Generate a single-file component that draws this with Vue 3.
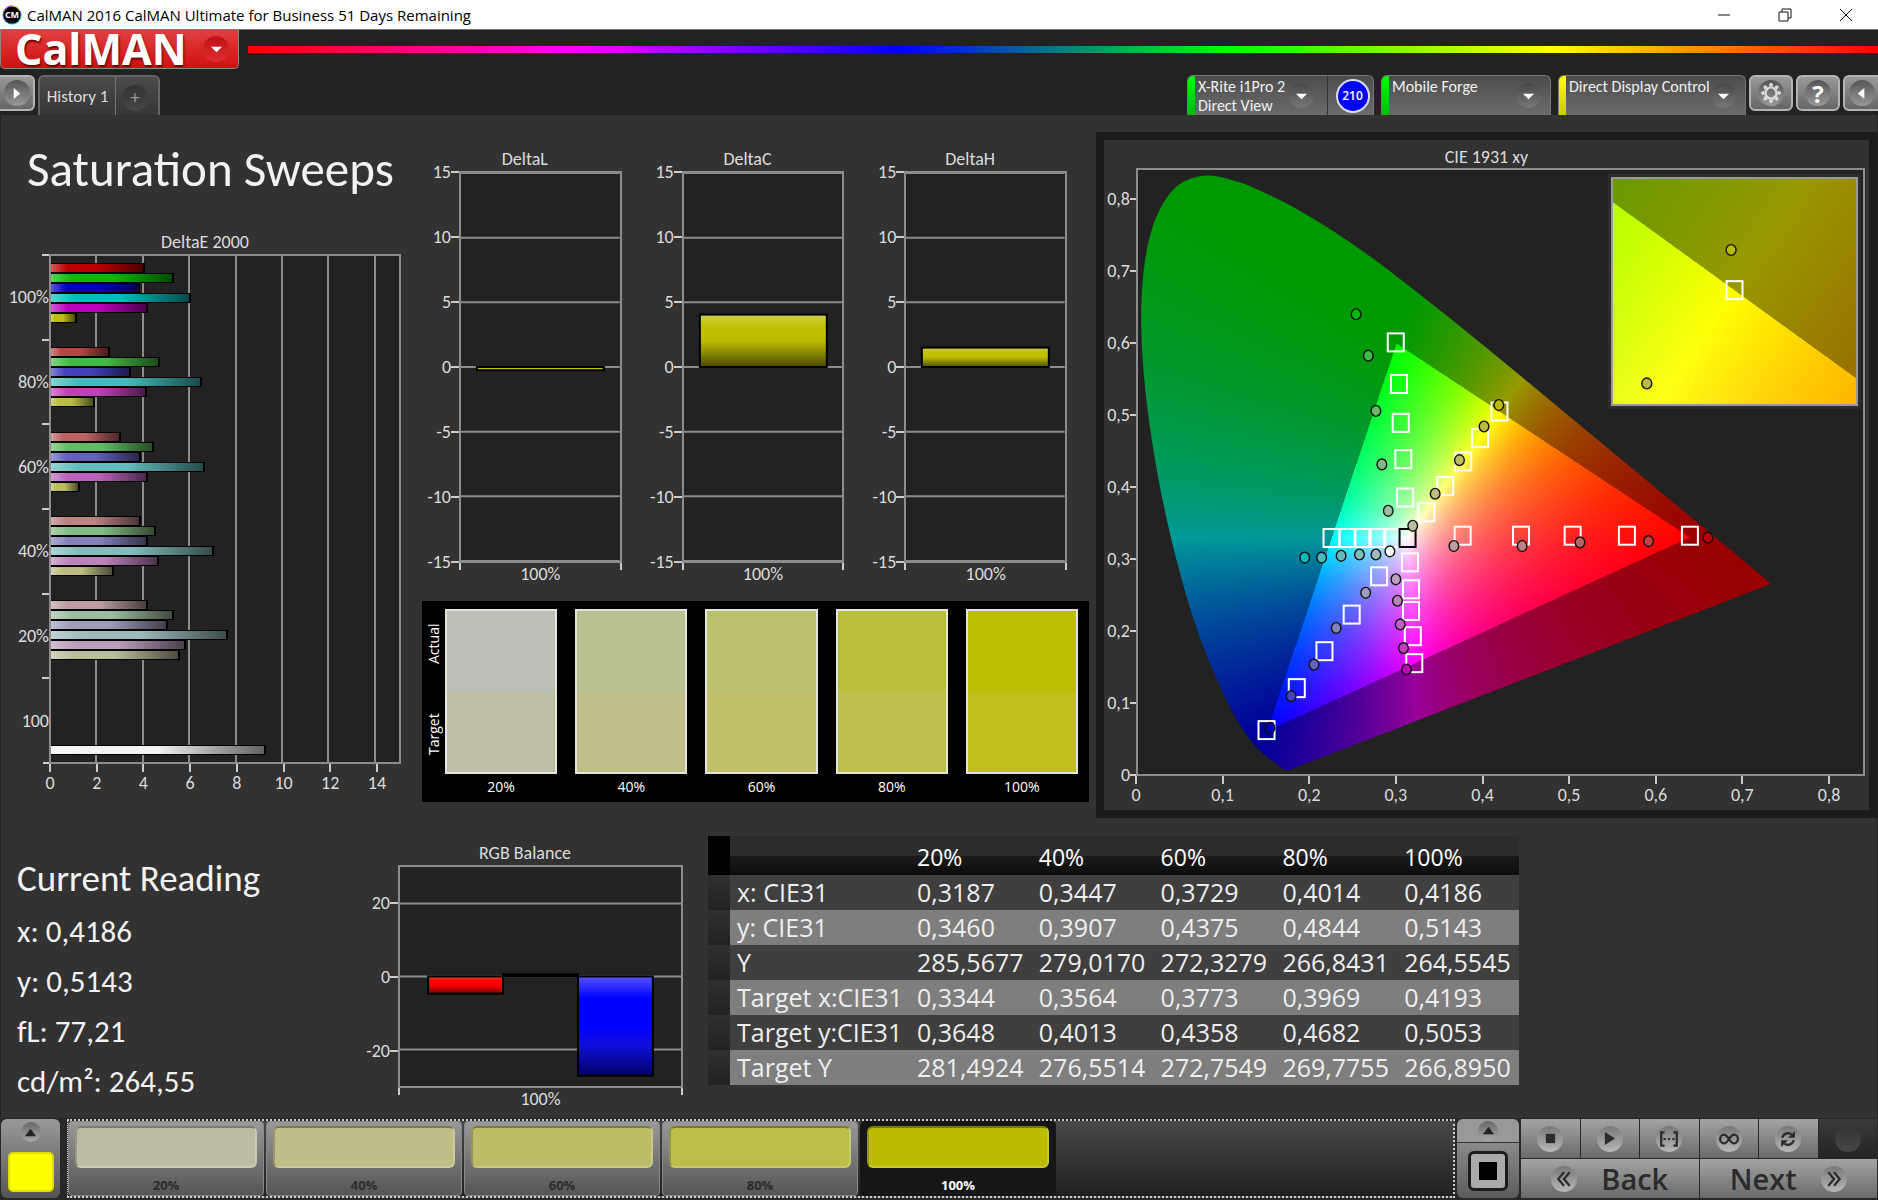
<script setup>
import { ref, onMounted } from 'vue'

const series = [[1, 0, 0], [0, 1, 0], [0, 0, 1], [0, 1, 1], [1, 0, 1], [1, 1, 0]]
const floors = [0, 66, 98, 130, 158]

// Colour of a series at a saturation step (0 = 100%, 4 = 20%).
function tone(channels, step) {
  return `rgb(${channels.map(c => (c ? 188 : floors[step])).join(',')})`
}

const deltaE = [
  { label: '100%', values: [4.06, 5.3, 3.82, 6.03, 4.19, 1.1] },
  { label: '80%', values: [2.55, 4.7, 3.46, 6.49, 4.12, 1.9] },
  { label: '60%', values: [3.02, 4.45, 3.9, 6.62, 4.18, 1.23] },
  { label: '40%', values: [3.86, 4.52, 4.19, 7.02, 4.66, 2.73] },
  { label: '20%', values: [4.19, 5.31, 5.05, 7.63, 5.82, 5.57] },
  { label: '100', values: [], white: 9.26 }
].map((g, step) => ({
  label: g.label,
  bars: g.values.map((v, i) => ({ v, color: tone(series[i], step) })),
  white: g.white
}))

const deltas = [
  { title: 'DeltaL', value: -0.25 },
  { title: 'DeltaC', value: 4.05 },
  { title: 'DeltaH', value: 1.5 }
]
const deltaTicks = [15, 10, 5, 0, -5, -10, -15]
const deltaY = v => ((15 - v) / 30) * 100

const balance = [
  { value: -4.7, fill: 'url(#gRed)' },
  { value: 0.6, fill: '#000' },
  { value: -27.2, fill: 'url(#gBlue)' }
]
const balanceY = v => ((30 - v) / 60) * 100

const swatches = [
  { label: '20%', actual: '#bcc0b4', target: '#bfbfa6', tile: '#bdbda3' },
  { label: '40%', actual: '#b9c092', target: '#c0bf88', tile: '#bfbe86' },
  { label: '60%', actual: '#bbc06f', target: '#bfbf6b', tile: '#bdbd69' },
  { label: '80%', actual: '#babf3a', target: '#bfbf4e', tile: '#bdbd4a' },
  { label: '100%', actual: '#bdc000', target: '#c0bf1c', tile: '#bdbd00' }
]

const table = [
  ['x: CIE31', '0,3187', '0,3447', '0,3729', '0,4014', '0,4186'],
  ['y: CIE31', '0,3460', '0,3907', '0,4375', '0,4844', '0,5143'],
  ['Y', '285,5677', '279,0170', '272,3279', '266,8431', '264,5545'],
  ['Target x:CIE31', '0,3344', '0,3564', '0,3773', '0,3969', '0,4193'],
  ['Target y:CIE31', '0,3648', '0,4013', '0,4358', '0,4682', '0,5053'],
  ['Target Y', '281,4924', '276,5514', '272,7549', '269,7755', '266,8950']
]

// Chromaticity chart: axis extents, targets and readings.
const main = { x0: 0, x1: 0.841, y0: 0, y1: 0.842 }
const detail = { x0: 0.3945, x1: 0.4441, y0: 0.4798, y1: 0.5302 }
const px = (v, x) => `${((x - v.x0) / (v.x1 - v.x0)) * 100}%`
const py = (v, y) => `${((v.y1 - y) / (v.y1 - v.y0)) * 100}%`

const targets = [
  [0.299, 0.6017], [0.3027, 0.5437], [0.3048, 0.4895], [0.3078, 0.4389], [0.3099, 0.3855],
  [0.3766, 0.3322], [0.4443, 0.3322], [0.5042, 0.3322], [0.5671, 0.3322], [0.6402, 0.3322],
  [0.3155, 0.2951], [0.3167, 0.2575], [0.3167, 0.2273], [0.3188, 0.1921], [0.3205, 0.1545],
  [0.2797, 0.2756], [0.2479, 0.2222], [0.2163, 0.1712], [0.1842, 0.1197], [0.1491, 0.0612],
  [0.2245, 0.329], [0.243, 0.329], [0.2607, 0.329], [0.2776, 0.329], [0.2949, 0.329],
  [0.3344, 0.3648], [0.3564, 0.4013], [0.3773, 0.4358], [0.3969, 0.4682], [0.4193, 0.5053]
]
const readings = [
  [[0.6611, 0.3294], [0.5922, 0.3247], [0.5127, 0.3229], [0.4456, 0.3178], [0.3664, 0.3178]],
  [[0.253, 0.6409], [0.2672, 0.5832], [0.276, 0.5061], [0.2829, 0.4316], [0.2903, 0.3669]],
  [[0.1531, 0.0643], [0.1776, 0.1085], [0.2042, 0.1525], [0.2299, 0.2035], [0.2641, 0.2526]],
  [[0.1934, 0.3017], [0.213, 0.3017], [0.2356, 0.3042], [0.2569, 0.306], [0.276, 0.306]],
  [[0.3114, 0.1457], [0.308, 0.1755], [0.3042, 0.2085], [0.301, 0.2415], [0.2991, 0.2714]],
  [[0.4186, 0.5143], [0.4014, 0.4844], [0.3729, 0.4375], [0.3447, 0.3907], [0.3187, 0.346]]
].flatMap((points, s) => points.map(([x, y], step) => ({ x, y, color: tone(series[s], step) })))
readings.push({ x: 0.2922, y: 0.3104, color: '#fff' })

const locus = [
  [0.1741, 0.005], [0.1714, 0.0051], [0.1689, 0.0069], [0.1644, 0.0109], [0.1566, 0.0177],
  [0.144, 0.0297], [0.1355, 0.0399], [0.1241, 0.0578], [0.1096, 0.0868], [0.0913, 0.1327],
  [0.0687, 0.2007], [0.0454, 0.295], [0.0235, 0.4127], [0.0082, 0.5384], [0.0039, 0.6548],
  [0.0139, 0.7502], [0.0389, 0.812], [0.0743, 0.8338], [0.1142, 0.8262], [0.1547, 0.8059],
  [0.1929, 0.7816], [0.2296, 0.7543], [0.2658, 0.7243], [0.3016, 0.6923], [0.3731, 0.6245],
  [0.4441, 0.5547], [0.5125, 0.4866], [0.5752, 0.4242], [0.627, 0.3725], [0.6658, 0.334],
  [0.6915, 0.3083], [0.719, 0.2809], [0.7347, 0.2653]
]

const mainCanvas = ref(null)
const detailCanvas = ref(null)

function paintGamut(canvas, view, clipped) {
  const w = canvas.width
  const h = canvas.height
  const ctx = canvas.getContext('2d')
  const img = ctx.createImageData(w, h)
  let o = 0
  for (let j = 0; j < h; j++) {
    const y = view.y1 - ((j + 0.5) / h) * (view.y1 - view.y0)
    for (let i = 0; i < w; i++) {
      const x = view.x0 + ((i + 0.5) / w) * (view.x1 - view.x0)
      const z = 1 - x - y
      const r = 3.2406 * x - 1.5372 * y - 0.4986 * z
      const g = -0.9689 * x + 1.8758 * y + 0.0415 * z
      const b = 0.0557 * x - 0.204 * y + 1.057 * z
      const level = (Math.min(r, g, b) < 0 ? 153 : 255) / Math.max(r, g, b)
      img.data[o++] = Math.max(0, r) * level
      img.data[o++] = Math.max(0, g) * level
      img.data[o++] = Math.max(0, b) * level
      img.data[o++] = 255
    }
  }
  ctx.putImageData(img, 0, 0)
  if (!clipped) return
  const p = locus.map(([x, y]) => [
    ((x - view.x0) / (view.x1 - view.x0)) * w,
    ((view.y1 - y) / (view.y1 - view.y0)) * h
  ])
  ctx.globalCompositeOperation = 'destination-in'
  ctx.beginPath()
  ctx.moveTo(...p[0])
  for (let k = 0; k < p.length - 1; k++) {
    const a = p[Math.max(0, k - 1)]
    const b = p[k]
    const c = p[k + 1]
    const d = p[Math.min(p.length - 1, k + 2)]
    ctx.bezierCurveTo(
      b[0] + (c[0] - a[0]) / 6, b[1] + (c[1] - a[1]) / 6,
      c[0] - (d[0] - b[0]) / 6, c[1] - (d[1] - b[1]) / 6,
      c[0], c[1]
    )
  }
  ctx.closePath()
  ctx.fill()
}

onMounted(() => {
  paintGamut(mainCanvas.value, main, true)
  paintGamut(detailCanvas.value, detail, false)
})

const cieY = ['0,8', '0,7', '0,6', '0,5', '0,4', '0,3', '0,2', '0,1', '0']
const cieX = [...cieY].reverse()
const teeth = [0, 45, 90, 135, 180, 225, 270, 315]
</script>

<template>
  <div class="app">
    <svg class="defs" aria-hidden="true">
      <defs>
        <linearGradient id="gYellow" x1="0" y1="0" x2="0" y2="1">
          <stop offset="0" stop-color="#d0d050" /><stop offset=".25" stop-color="#c0c000" />
          <stop offset=".5" stop-color="#bcbc04" /><stop offset="1" stop-color="#4a4a00" />
        </linearGradient>
        <linearGradient id="gRed" x1="0" y1="0" x2="0" y2="1">
          <stop offset="0" stop-color="#f44" /><stop offset=".25" stop-color="#f00" />
          <stop offset=".5" stop-color="#f80404" /><stop offset="1" stop-color="#700" />
        </linearGradient>
        <linearGradient id="gBlue" x1="0" y1="0" x2="0" y2="1">
          <stop offset="0" stop-color="#55f" /><stop offset=".22" stop-color="#00f" />
          <stop offset=".5" stop-color="#00f" /><stop offset=".7" stop-color="#1010d8" />
          <stop offset="1" stop-color="#006" />
        </linearGradient>
      </defs>
    </svg>

    <div class="titlebar">
      <svg class="appicon" viewBox="0 0 20 20" aria-hidden="true">
        <circle cx="10" cy="10" r="9" fill="#000" stroke="#36f" stroke-width="1" />
        <path d="M2 6A9 9 0 0 1 10 1" stroke="#f3c" fill="none" /><path d="M10 1A9 9 0 0 1 18 6" stroke="#fd0" fill="none" />
        <path d="M19 10A9 9 0 0 1 12 19" stroke="#0c6" fill="none" />
        <text x="10" y="13" text-anchor="middle" fill="#fff" font-size="9" font-weight="700">CM</text>
      </svg>
      <span class="wintitle">CalMAN 2016 CalMAN Ultimate for Business 51 Days Remaining</span>
      <button class="win" aria-label="Minimize"><svg viewBox="0 0 14 14"><path d="M1 7H13" /></svg></button>
      <button class="win" aria-label="Restore"><svg viewBox="0 0 14 14"><path d="M1 4H10V13H1ZM4 4V1H13V10H10" /></svg></button>
      <button class="win" aria-label="Close"><svg viewBox="0 0 14 14"><path d="M1 1L13 13M13 1L1 13" /></svg></button>
    </div>

    <header>
      <div class="brandrow">
        <button class="logo"><span class="name">CalMAN</span>
          <span class="knob redknob"><svg viewBox="0 0 14 14"><path d="M1 4H13L7 10Z" fill="#fff" /></svg></span>
        </button>
        <div class="rainbow"></div>
      </div>
      <div class="tabrow">
        <button class="square first" aria-label="Expand"><span class="knob"><svg viewBox="0 0 14 14"><path d="M4 1V13L11 7Z" fill="#fff" /></svg></span></button>
        <div class="tabs">
          <button class="tab">History 1</button>
          <button class="addtab" aria-label="Add tab"><span class="knob dark">+</span></button>
        </div>
        <div class="spacer"></div>
        <div class="device meter green">
          <button class="devbtn"><span>X-Rite i1Pro 2<br>Direct View</span>
            <span class="knob deep"><svg viewBox="0 0 14 14"><path d="M1 5H13L7 11Z" fill="#fff" /></svg></span></button>
          <button class="count"><span>210</span></button>
        </div>
        <div class="device forge green">
          <button class="devbtn"><span>Mobile Forge</span>
            <span class="knob deep"><svg viewBox="0 0 14 14"><path d="M1 5H13L7 11Z" fill="#fff" /></svg></span></button>
        </div>
        <div class="device direct yellow">
          <button class="devbtn"><span>Direct Display Control</span>
            <span class="knob deep"><svg viewBox="0 0 14 14"><path d="M1 5H13L7 11Z" fill="#fff" /></svg></span></button>
        </div>
        <button class="square" aria-label="Settings"><span class="knob"><svg class="big" viewBox="-10 -10 20 20">
          <circle r="5" fill="none" stroke="#ddd" stroke-width="2" />
          <path v-for="a in teeth" :key="a" d="M-2 -6L-1 -9H1L2 -6Z" fill="#ddd" :transform="`rotate(${a})`" />
        </svg></span></button>
        <button class="square help" aria-label="Help"><span class="knob">?</span></button>
        <button class="square last" aria-label="Collapse"><span class="knob"><svg viewBox="0 0 14 14"><path d="M10 1V13L3 7Z" fill="#fff" /></svg></span></button>
      </div>
    </header>

    <main>
      <section class="upper">
        <div class="colA">
          <h1>Saturation Sweeps</h1>
          <figure class="hchart">
            <figcaption>DeltaE 2000</figcaption>
            <div class="hgroups">
              <div v-for="g in deltaE" :key="g.label" class="hlabel">{{ g.label }}</div>
            </div>
            <div class="hplot">
              <div class="hlines"><i v-for="n in 7" :key="n"></i></div>
              <div class="hbars">
                <div v-for="g in deltaE" :key="g.label" class="hgroup">
                  <div v-for="(b, i) in g.bars" :key="i" class="hbar" :style="{ width: (b.v / 15) * 100 + '%', backgroundColor: b.color }"></div>
                  <div v-if="g.white" class="hbar white" :style="{ width: (g.white / 15) * 100 + '%' }"></div>
                </div>
              </div>
            </div>
            <div class="xticks haxis"><span v-for="n in 8" :key="n">{{ (n - 1) * 2 }}</span></div>
          </figure>
        </div>

        <div class="colB">
          <div class="deltas">
            <figure v-for="d in deltas" :key="d.title" class="vchart">
              <figcaption>{{ d.title }}</figcaption>
              <div class="yticks"><span v-for="t in deltaTicks" :key="t">{{ t }}</span></div>
              <svg class="vplot">
                <line v-for="t in deltaTicks" :key="t" x1="0" x2="100%" :y1="deltaY(t) + '%'" :y2="deltaY(t) + '%'" />
                <rect x="10%" width="80%" :y="deltaY(Math.max(d.value, 0)) + '%'" :height="Math.abs(d.value) / 30 * 100 + '%'"
                  :fill="d.value < 0 ? '#c0c000' : 'url(#gYellow)'" />
              </svg>
              <div class="xlabel">100%</div>
            </figure>
          </div>
          <div class="compare">
            <div class="sides"><span>Target</span><span>Actual</span></div>
            <div v-for="s in swatches" :key="s.label" class="swatch">
              <div class="pair"><i :style="{ background: s.actual }"></i><i :style="{ background: s.target }"></i></div>
              <span>{{ s.label }}</span>
            </div>
          </div>
        </div>

        <div class="colC">
          <figure class="cie">
            <figcaption>CIE 1931 xy</figcaption>
            <div class="yticks cieyticks"><span v-for="t in cieY" :key="t">{{ t }}</span></div>
            <div class="cieplot">
              <canvas ref="mainCanvas" width="1456" height="1208"></canvas>
              <svg class="marks">
                <svg v-for="(t, i) in targets" :key="'t' + i" :x="px(main, t[0])" :y="py(main, t[1])" overflow="visible">
                  <rect x="-8" y="-9" width="16" height="18" fill="none" stroke="#fff" stroke-width="2" />
                </svg>
                <svg :x="px(main, 0.3127)" :y="py(main, 0.329)" overflow="visible">
                  <rect x="-8" y="-9" width="16" height="18" fill="none" stroke="#000" stroke-width="2" />
                </svg>
                <svg v-for="(r, i) in readings" :key="'r' + i" :x="px(main, r.x)" :y="py(main, r.y)" overflow="visible">
                  <ellipse rx="4.8" ry="5.4" :fill="r.color" stroke="#111" stroke-width="1.4" />
                </svg>
              </svg>
              <div class="inset">
                <canvas ref="detailCanvas" width="488" height="450"></canvas>
                <svg class="marks">
                  <svg :x="px(detail, 0.4193)" :y="py(detail, 0.5053)" overflow="visible">
                    <rect x="-8" y="-9" width="16" height="18" fill="none" stroke="#fff" stroke-width="2" />
                  </svg>
                  <svg v-for="(r, i) in [readings[25], readings[26]]" :key="i" :x="px(detail, r.x)" :y="py(detail, r.y)" overflow="visible">
                    <ellipse rx="5" ry="5.4" :fill="r.color" stroke="#111" stroke-width="1.4" />
                  </svg>
                </svg>
              </div>
            </div>
            <div class="xticks ciexticks"><span v-for="t in cieX" :key="t">{{ t }}</span></div>
          </figure>
        </div>
      </section>

      <section class="lower">
        <div class="reading">
          <h2>Current Reading</h2>
          <p>x: 0,4186</p>
          <p>y: 0,5143</p>
          <p>fL: 77,21</p>
          <p>cd/m²: 264,55</p>
        </div>
        <figure class="vchart rgb">
          <figcaption>RGB Balance</figcaption>
          <div class="yticks"><span v-for="t in [20, 0, -20]" :key="t">{{ t }}</span></div>
          <svg class="vplot">
            <line v-for="t in [20, 0, -20]" :key="t" x1="0" x2="100%" :y1="balanceY(t) + '%'" :y2="balanceY(t) + '%'" />
            <rect v-for="(b, i) in balance" :key="i" :x="10 + (i * 80) / 3 + '%'" :width="80 / 3 + '%'"
              :y="balanceY(Math.max(b.value, 0)) + '%'" :height="Math.abs(b.value) / 60 * 100 + '%'" :fill="b.fill" />
          </svg>
          <div class="xlabel">100%</div>
        </figure>
        <table>
          <thead>
            <tr><td class="stub"></td><th></th><th v-for="s in swatches" :key="s.label" scope="col">{{ s.label }}</th></tr>
          </thead>
          <tbody>
            <tr v-for="row in table" :key="row[0]">
              <td class="stub"></td><th scope="row">{{ row[0] }}</th>
              <td v-for="(v, i) in row.slice(1)" :key="i">{{ v }}</td>
            </tr>
          </tbody>
        </table>
      </section>
    </main>

    <footer>
      <button class="picker" aria-label="Choose pattern">
        <span class="knob small"><svg viewBox="0 0 14 14"><path d="M1 11H13L7 3Z" fill="#222" /></svg></span>
        <span class="chip"></span>
      </button>
      <div class="strip">
        <button v-for="(s, i) in swatches" :key="s.label" class="tile" :class="{ active: i === 4 }">
          <span class="face" :style="{ background: s.tile }"></span>{{ s.label }}
        </button>
      </div>
      <div class="mode">
        <button class="up" aria-label="Open"><span class="knob small"><svg viewBox="0 0 14 14"><path d="M1 11H13L7 3Z" fill="#222" /></svg></span></button>
        <button class="window" aria-label="Window"><span><i></i></span></button>
      </div>
      <div class="transport">
        <div class="row">
          <button aria-label="Stop"><span class="knob lite"><svg viewBox="0 0 14 14"><path d="M2 2H12V12H2Z" fill="#2b2b2b" /></svg></span></button>
          <button aria-label="Play"><span class="knob lite"><svg viewBox="0 0 14 14"><path d="M2 0V14L13 7Z" fill="#2b2b2b" /></svg></span></button>
          <button aria-label="Range"><span class="knob lite"><svg class="wide" viewBox="0 0 18 14"><path d="M5 1H2V13H5M13 1H16V13H13M4 7H6M8 7H10M12 7H14" fill="none" stroke="#2b2b2b" stroke-width="2" /></svg></span></button>
          <button aria-label="Continuous"><span class="knob lite"><svg class="wide" viewBox="0 0 18 14"><path d="M9 7C7 4 6 3 4.5 3A3.5 4 0 0 0 4.5 11C6 11 7 10 9 7C11 4 12 3 13.5 3A3.5 4 0 0 1 13.5 11C12 11 11 10 9 7Z" fill="none" stroke="#2b2b2b" stroke-width="2" /></svg></span></button>
          <button aria-label="Refresh"><span class="knob lite"><svg class="loop" viewBox="0 0 14 14"><path d="M2 6A5 5 0 0 1 10 3M12 8A5 5 0 0 1 4 11" fill="none" stroke="#2b2b2b" stroke-width="2" /><path d="M13 0V6H7ZM1 14V8H7Z" fill="#2b2b2b" /></svg></span></button>
          <button class="off" aria-label="Record" disabled><span class="knob dark"></span></button>
        </div>
        <div class="row">
          <button class="nav"><span class="knob lite"><svg class="loop" viewBox="0 0 14 14"><path d="M7 1L2 7L7 13M12 1L7 7L12 13" fill="none" stroke="#2b2b2b" stroke-width="2" /></svg></span>Back</button>
          <button class="nav">Next<span class="knob lite"><svg class="loop" viewBox="0 0 14 14"><path d="M2 1L7 7L2 13M7 1L12 7L7 13" fill="none" stroke="#2b2b2b" stroke-width="2" /></svg></span></button>
        </div>
      </div>
    </footer>
  </div>
</template>

<style>
body { margin: 0; background: #323232; }
</style>

<style scoped>
* { box-sizing: border-box; }
.app { display: flex; flex-direction: column; min-height: 100vh; background: #323232; color: #dcdcdc; font-family: Carlito, Calibri, Lato, sans-serif; font-size: 18px; }
.defs { position: absolute; width: 0; height: 0; }
button { border: 0; padding: 0; margin: 0; background: none; font: inherit; color: inherit; }
figure, h1, h2, p { margin: 0; font-weight: 400; }

.titlebar { display: flex; align-items: center; height: 30px; background: #fff; color: #000; border-bottom: 1px solid #777; font: 15px "Open Sans", "Noto Sans", sans-serif; padding: 0 2px; }
.appicon { width: 20px; height: 20px; margin-right: 5px; }
.wintitle { flex: 1; }
.win { width: 61px; height: 29px; display: flex; align-items: center; justify-content: center; }
.win svg { width: 14px; height: 14px; fill: none; stroke: #111; stroke-width: 1; }

header { background: #222; height: 85px; display: flex; flex-direction: column; justify-content: space-between; }
.brandrow { display: flex; align-items: flex-start; gap: 9px; }
.logo { display: flex; align-items: center; justify-content: space-between; width: 239px; height: 39px; padding: 0 9px 0 14px; background: linear-gradient(#e04040, #d01010); border: 1px solid #888; border-top: 0; border-radius: 0 0 5px 5px; color: #fff; font: 700 43px/34px "Open Sans", sans-serif; overflow: hidden; }
.name { text-shadow: 1px 2px 2px #600; }
.rainbow { flex: 1; height: 7px; margin-top: 16px; background: linear-gradient(90deg, #f00, #f0f 20%, #00f 40%, #0f0 60%, #ff0 80%, #f00); }
.knob { flex: none; display: flex; align-items: center; justify-content: center; width: 26px; height: 26px; border-radius: 50%; background: linear-gradient(#555, #999); }
.knob svg { width: 13px; height: 13px; }
.knob svg.big { width: 22px; height: 22px; }
.knob svg.wide { width: 20px; height: 16px; }
.knob svg.loop { width: 16px; height: 16px; }
.redknob { background: linear-gradient(#c01018, #e03030); }
.knob.dark { background: linear-gradient(#333, #484848); color: #999; }
.knob.deep { background: linear-gradient(#484848, #777); }
.knob.small { width: 20px; height: 20px; background: linear-gradient(#666, #aaa); }
.knob.lite { background: linear-gradient(#777, #b8b8b8); }

.tabrow { display: flex; align-items: flex-start; height: 40px; }
.square { display: flex; align-items: center; justify-content: center; width: 44px; height: 36px; margin-right: 3px; border: 2px solid #b4b4b4; border-radius: 6px; background: linear-gradient(#999, #666); }
.square.first { width: 35px; border-left: 0; border-radius: 0 6px 6px 0; }
.square.last { width: 35px; margin-right: 0; border-right: 0; border-radius: 6px 0 0 6px; }
.help { font: 700 24px "Open Sans", sans-serif; color: #fff; }
.tabs { display: flex; height: 40px; border: 2px solid #666; border-bottom: 0; border-radius: 6px 6px 0 0; background: linear-gradient(#4a4a4a, #363636); }
.tab { width: 75px; font-size: 17px; }
.addtab { display: flex; justify-content: center; width: 43px; padding: 8px 4px 0 0; border-left: 1px solid #777; }
.spacer { flex: 1; }
.device { display: flex; height: 40px; border: 1px solid #777; border-bottom: 0; border-radius: 6px 6px 0 0; background: linear-gradient(#4c4c4c, #6c6c6c); overflow: hidden; }
.device::before { content: ""; width: 7px; }
.green::before { background: linear-gradient(#0f0, #0b0); }
.yellow::before { background: linear-gradient(#ff0, #cc0); }
.meter { width: 187px; margin-right: 7px; }
.forge { width: 170px; margin-right: 7px; }
.direct { width: 188px; margin-right: 3px; }
.devbtn { flex: 1; display: flex; align-items: flex-start; justify-content: space-between; padding: 1px 9px 0 3px; text-align: left; font-size: 16px; line-height: 19px; color: #f0f0f0; white-space: nowrap; }
.meter .devbtn { padding-right: 13px; }
.direct .knob { margin-left: -9px; }
.devbtn .knob { margin-top: 6px; width: 25px; height: 25px; }
.count { width: 46px; padding-left: 4px; border-left: 1px solid #333; display: flex; align-items: center; justify-content: center; }
.count span { width: 34px; height: 34px; border: 2px solid #dde; border-radius: 50%; background: #00f; color: #fff; font: 600 12px/30px "Open Sans", sans-serif; }

main { flex: 1; border-left: 1px solid #222; border-right: 1px solid #222; }
.upper { display: grid; grid-template-columns: 421fr 667fr 788fr; }
figcaption { text-align: center; line-height: 22px; height: 23px; }
h1 { padding: 24px 0 0 26px; font-size: 49px; line-height: 60px; color: #f2f2f2; white-space: nowrap; }

.hchart { display: grid; grid-template-columns: 48px 1fr; padding: 32px 21px 0 0; }
.hchart figcaption { grid-column: 1 / 3; padding-left: 8px; }
.hgroups { display: grid; grid-template-rows: repeat(6, 1fr); border-bottom: 2px solid #ccc; border-image: linear-gradient(90deg, transparent 85%, #ccc 85%) 2; }
.hlabel { position: relative; display: flex; align-items: center; justify-content: flex-end; padding-top: 2px; }
.hlabel::before { content: ""; position: absolute; top: 0; right: 0; width: 7px; height: 2px; background: #ccc; }
.hplot { display: grid; height: 510px; border: 2px solid #8c8c8c; background: #222; }
.hlines, .hbars { grid-area: 1 / 1; }
.hlines { display: grid; grid-template-columns: repeat(7, 2fr) 1fr; }
.hlines i { border-right: 2px solid #8c8c8c; }
.hbars { display: grid; grid-template-rows: repeat(6, 1fr); }
.hgroup { padding-top: 7px; }
.hbar { height: 10px; border: 2px solid #000; border-width: 1px 2px 1px 0; background-image: linear-gradient(90deg, rgba(255,255,255,.35), rgba(255,255,255,0) 18%, rgba(0,0,0,0) 50%, rgba(0,0,0,.6)); }
.hbar.white { margin-top: 60px; background-color: #f2f2f2; }
.xticks { display: flex; justify-content: space-between; }
.xticks span { width: 0; display: flex; flex-direction: column; align-items: center; line-height: 22px; white-space: nowrap; }
.xticks span::before { content: ""; width: 2px; height: 8px; background: #ccc; }
.haxis { grid-column: 2; padding: 0 24px 0 1px; }
.haxis span { height: 32px; }

.colB { padding-top: 33px; }
.deltas { display: grid; grid-template-columns: repeat(3, 1fr); gap: 24px; padding: 0 22px 0 1px; }
.vchart { display: grid; grid-template-columns: 36px 1fr; }
.vchart figcaption { grid-column: 1 / 3; padding-left: 5px; }
.yticks { display: flex; flex-direction: column; justify-content: space-between; padding: 1px 0; }
.yticks span { height: 0; display: flex; align-items: center; justify-content: flex-end; }
.yticks span::after { content: ""; width: 8px; height: 2px; background: #ccc; }
.vplot { display: block; width: 100%; height: 392px; background: #222; border: 2px solid #8c8c8c; }
.vplot line { stroke: #8c8c8c; stroke-width: 2; }
.vplot rect { stroke: #000; stroke-width: 2; }
.xlabel { grid-column: 2; height: 22px; line-height: 22px; text-align: center; background: linear-gradient(#ccc, #ccc) 0 0 / 2px 7px no-repeat, linear-gradient(#ccc, #ccc) 100% 0 / 2px 7px no-repeat; }

.compare { display: grid; grid-template-columns: 4px repeat(5, 1fr); column-gap: 18px; margin-top: 16px; height: 201px; padding: 8px 11px 0 1px; background: #000; color: #fff; font: 14px "Open Sans", "Noto Sans", sans-serif; }
.sides { display: flex; justify-content: center; gap: 49px; width: 22px; height: 161px; writing-mode: vertical-rl; transform: rotate(180deg); }
.sides span { line-height: 22px; }
.swatch { text-align: center; }
.swatch span { line-height: 25px; }
.pair { display: grid; grid-template-rows: 1fr 1fr; height: 165px; border: 2px solid #e4e4dc; }

.colC { padding-left: 7px; margin-top: 17px; }
.cie { display: grid; grid-template-columns: 32px 1fr; grid-template-rows: 24px 608px 1fr; height: 686px; border: 8px solid #1b1b1b; padding: 4px 4px 0 0; background: #323232; }
.cie figcaption { grid-column: 1 / 3; padding-left: 4px; line-height: 26px; }
.cieyticks { padding: 31px 0 1px; }
.cieyticks span::after { width: 6px; }
.cieplot { position: relative; display: grid; grid-template: minmax(0, 1fr) / minmax(0, 1fr); border: 2px solid #8c8c8c; background: #222; }
.cieplot canvas, .marks { grid-area: 1 / 1; display: block; width: 100%; height: 100%; min-width: 0; min-height: 0; }
.marks { overflow: visible; }
.inset { position: absolute; top: 7px; right: 5px; width: 247px; height: 229px; display: grid; grid-template: minmax(0, 1fr) / minmax(0, 1fr); border: 2px solid #999; outline: 3px solid #2c2c2c; }
.ciexticks { grid-column: 2; padding: 0 36px 0 0; }
.ciexticks span { height: 30px; }

.lower { display: grid; grid-template-columns: 361fr 321fr 25fr 811fr 358fr; align-items: start; }
.reading { padding: 34px 0 0 16px; color: #f2f2f2; white-space: nowrap; }
h2 { font-size: 37px; line-height: 54px; }
.reading p { font-size: 31px; line-height: 50px; }
.rgb { padding-top: 24px; }
.rgb .yticks { padding: 38px 0 37px; }
.rgb .vplot { height: 223px; }
table { grid-column: 4; margin-top: 18px; border-collapse: collapse; table-layout: fixed; width: 100%; font: 25px "Open Sans", "Noto Sans", sans-serif; color: #eee; }
th, td { height: 35px; padding: 0 0 0 7px; line-height: 33px; text-align: left; font-weight: 400; white-space: nowrap; }
thead th { height: 39px; padding-top: 4px; font-size: 23px; color: #fff; background: linear-gradient(#2c2c2c 50%, #1a1a1a 51%, #0c0c0c); }
thead th:nth-child(2) { width: 180px; }
tbody tr { background: #3f3f3f; }
tbody tr:nth-child(even) { background: #7e7e7e; }
.stub { width: 22px; padding: 0; }
thead .stub { background: #000; }
tbody .stub { background: linear-gradient(#303030, #222); }

footer { display: flex; height: 82px; padding: 1px 1px 2px; background: #282828; }
.picker { display: flex; flex-direction: column; align-items: center; justify-content: space-between; width: 59px; padding: 3px 0 6px; margin-right: 7px; border-radius: 6px; background: linear-gradient(#999, #555); }
.chip { width: 46px; height: 40px; border: 2px solid #dd0; border-radius: 5px; background: #ff0; }
.strip { flex: 1; display: flex; gap: 2px; border: 2px dotted #ccc; border-left-width: 1px; background: linear-gradient(#484848, #202020); }
.tile { flex: 0 0 196px; display: flex; flex-direction: column; align-items: center; gap: 7px; padding: 4px 6px 0; border: 1px solid #888; border-radius: 4px; background: linear-gradient(#999, #555); color: #2b2b2b; font: 700 13px/20px "Open Sans", sans-serif; }
.face { width: 100%; height: 48px; border-radius: 6px; border: 2px solid rgba(0,0,0,.2); border-color: rgba(0,0,0,.35) rgba(255,255,255,.2) rgba(255,255,255,.2) rgba(0,0,0,.2); }
.tile.active { background: #161616; border-color: #161616; color: #fff; }
.mode { display: flex; flex-direction: column; width: 62px; margin: 0 2px; border-radius: 6px; overflow: hidden; }
.up { display: flex; align-items: center; justify-content: center; height: 24px; background: #999; border-bottom: 1px solid #333; }
.window { flex: 1; display: flex; align-items: center; justify-content: center; background: linear-gradient(#8a8a8a, #5c5c5c); }
.window span { display: flex; align-items: center; justify-content: center; width: 40px; height: 40px; border: 3px solid #1c1c1c; border-radius: 6px; background: #aaa; }
.window i { width: 18px; height: 18px; background: #000; }
.transport { width: 356px; display: flex; flex-direction: column; gap: 1px; }
.row { flex: 1; display: flex; gap: 1px; }
.row button { flex: 1; display: flex; align-items: center; justify-content: center; background: linear-gradient(#a4a4a4, #6a6a6a); }
.row .off { background: linear-gradient(#3a3a3a, #242424); }
.row .nav { gap: 24px; color: #2b2b2b; font: 600 29px/36px "Open Sans", sans-serif; }
</style>
